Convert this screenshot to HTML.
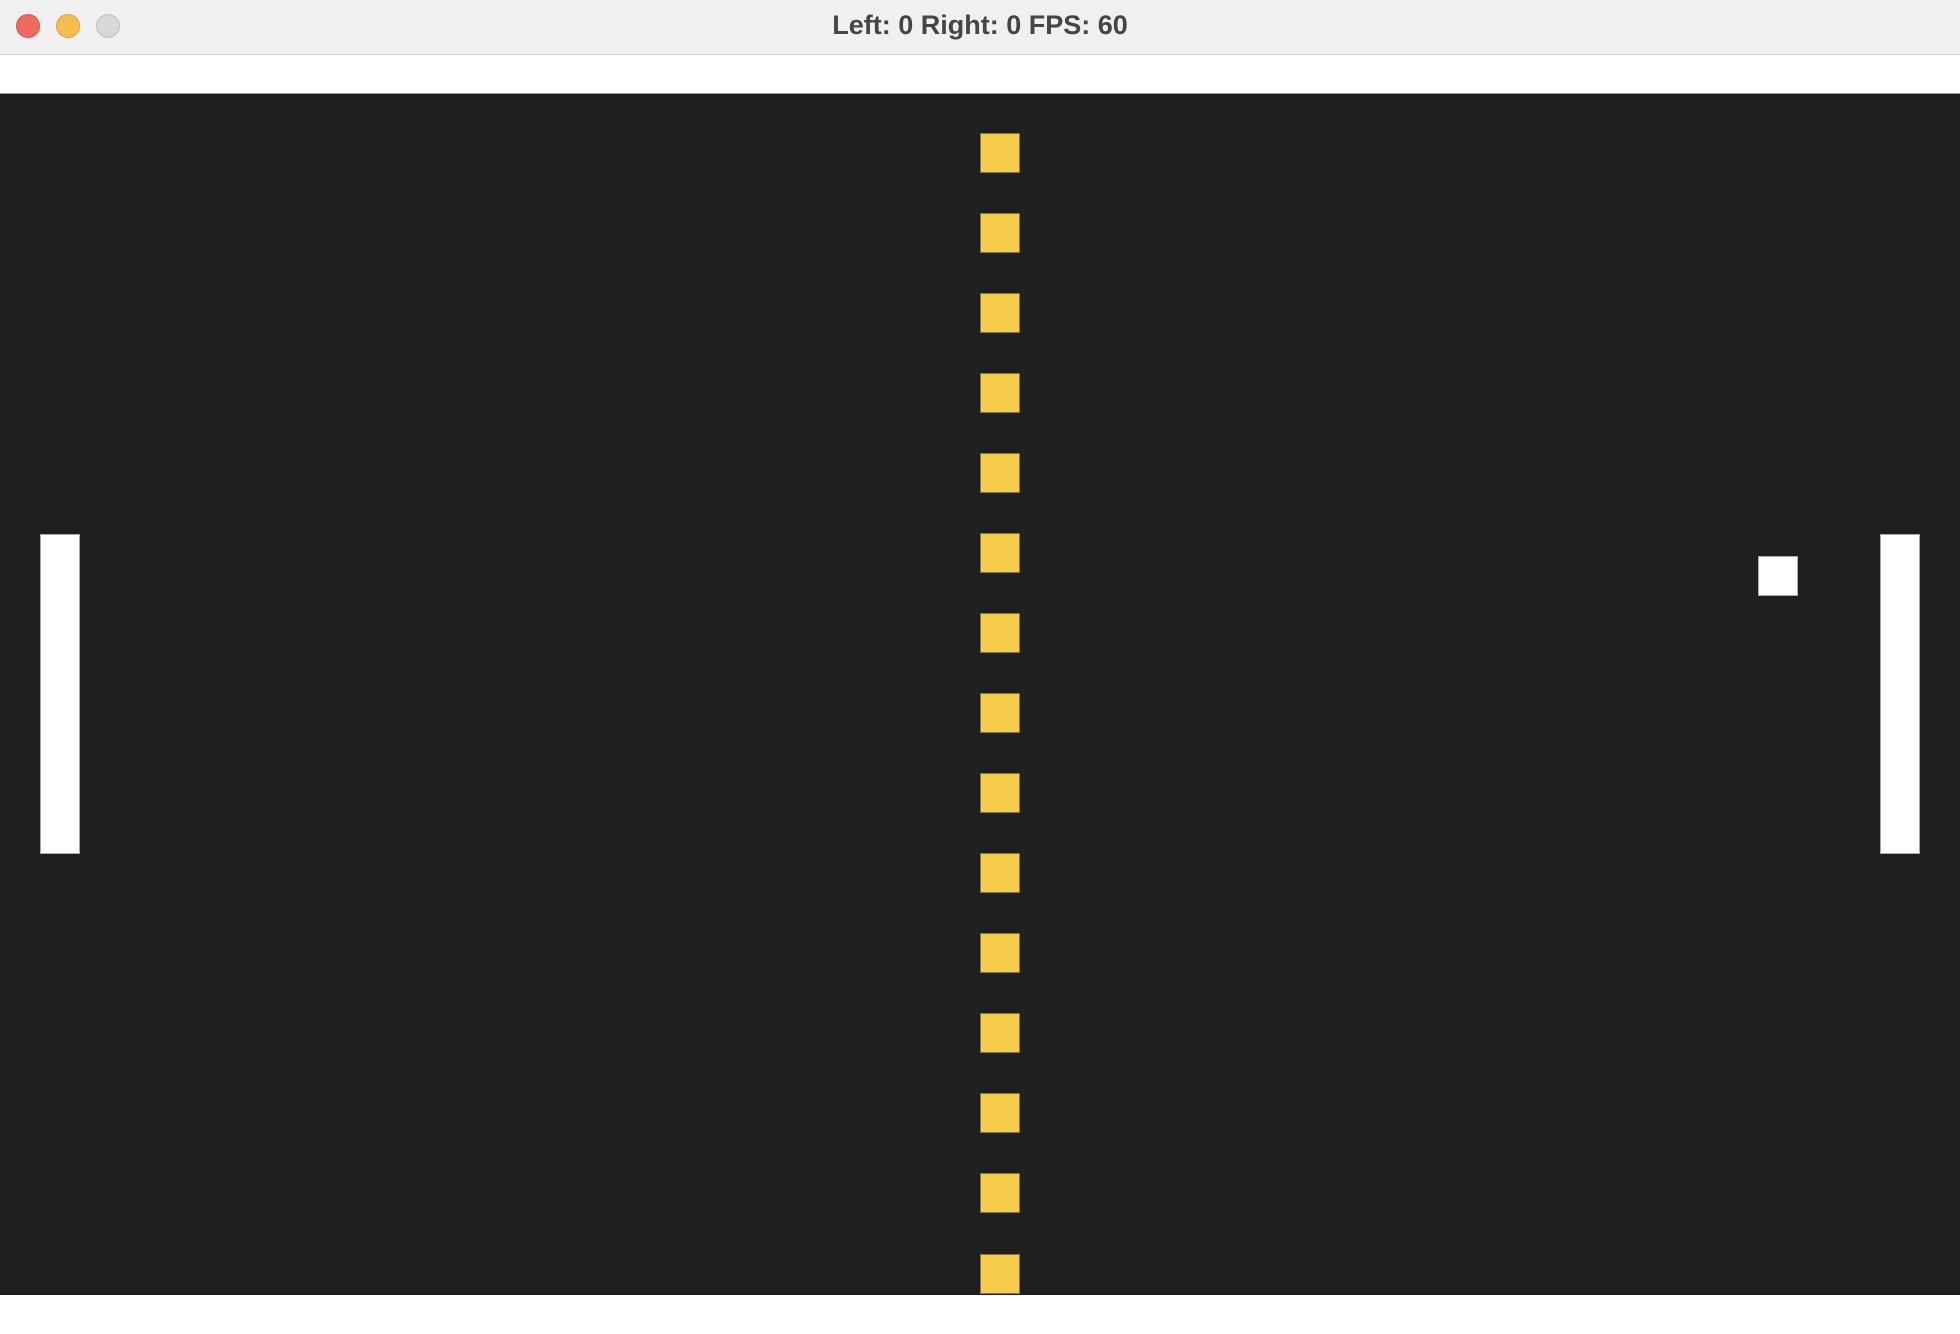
<!DOCTYPE html>
<html><head><style>
html,body{margin:0;padding:0;background:#fff;}
body{width:1960px;height:1334px;position:relative;overflow:hidden;font-family:"Liberation Sans",sans-serif;border-radius:0 0 14px 14px;}
.tb{position:absolute;left:0;top:0;width:1960px;height:54px;background:#f0f0f0;border-bottom:1px solid #d4d4d4;}
.dot{position:absolute;top:14px;width:22px;height:22px;border-radius:50%;}
.title{position:absolute;left:0;width:1960px;top:10px;text-align:center;font-weight:bold;font-size:27px;color:#454545;}
.game{position:absolute;left:0;top:93px;width:1960px;height:1201px;background:#1f1f1f;border-top:1px solid #999;}
.y{position:absolute;left:980px;width:40px;height:40px;background:#f6cd4a;box-shadow:inset 0 0 0 1px #8a7430;}
.w{position:absolute;background:#fff;box-shadow:inset 0 0 0 1px #aaa;}
</style></head><body>
<div class="tb">
<div class="dot" style="left:16px;background:#ee6a5f;border:1px solid #d8574c"></div>
<div class="dot" style="left:56px;background:#f5be4f;border:1px solid #dca23c"></div>
<div class="dot" style="left:96px;background:#d8d8d8;border:1px solid #bdbdbd"></div>
<div class="title">Left: 0 Right: 0 FPS: 60</div>
</div>
<div class="game"></div>
<div class="y" style="top:133px"></div><div class="y" style="top:213px"></div><div class="y" style="top:293px"></div>
<div class="y" style="top:373px"></div><div class="y" style="top:453px"></div><div class="y" style="top:533px"></div>
<div class="y" style="top:613px"></div><div class="y" style="top:693px"></div><div class="y" style="top:773px"></div>
<div class="y" style="top:853px"></div><div class="y" style="top:933px"></div><div class="y" style="top:1013px"></div>
<div class="y" style="top:1093px"></div><div class="y" style="top:1173px"></div><div class="y" style="top:1254px"></div>
<div class="w" style="left:40px;top:534px;width:40px;height:320px"></div>
<div class="w" style="left:1880px;top:534px;width:40px;height:320px"></div>
<div class="w" style="left:1758px;top:556px;width:40px;height:40px"></div>
</body></html>
